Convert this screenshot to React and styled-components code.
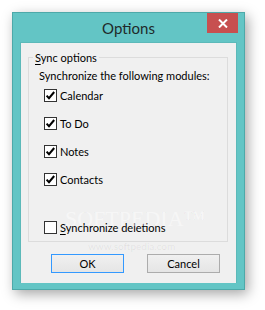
import React from "react";
import styled, { createGlobalStyle } from "styled-components";

const Global = createGlobalStyle`
  html, body { margin: 0; padding: 0; background: #ffffff; overflow: hidden; }
  body { font-family: Lato, "Noto Sans", sans-serif; }
`;

const Stage = styled.div`
  width: 265px;
  height: 310px;
  padding: 12px 0 0 12px;
  box-sizing: border-box;
`;

const Window = styled.div`
  position: relative;
  width: 233px;
  height: 278px;
  box-sizing: border-box;
  border: 1px solid #4da9a9;
  background: #63c5c5;
  box-shadow: 3px 4px 12px rgba(0, 0, 0, 0.35);
  display: flex;
  flex-direction: column;
  overflow: hidden;
`;

const TitleBar = styled.div`
  height: 29px;
  display: grid;
  grid-template-columns: 1fr auto 1fr;
  align-items: start;
`;

const Title = styled.div`
  grid-column: 2;
  font-size: 15px;
  line-height: 29px;
  color: #1f2a2a;
  padding-top: 1px;
`;

const CloseButton = styled.div`
  grid-column: 3;
  justify-self: end;
  margin-right: 6px;
  width: 31px;
  height: 20px;
  background: #c75050;
  display: flex;
  align-items: center;
  justify-content: center;
`;

const Client = styled.div`
  flex: 1;
  margin: 0 7px 6px 7px;
  background: #f0f0f0;
  border: 1px solid #5cb9b9;
  border-bottom: none;
  display: flex;
  flex-direction: column;
  padding: 7px 8px 0 7px;
  font-size: 11px;
  color: #000;
  white-space: nowrap;
`;

const GroupBox = styled.fieldset`
  margin: 0;
  border: 1px solid #dcdcdc;
  padding: 3px 8px 0 10px;
  height: 192px;
  box-sizing: border-box;
  display: flex;
  flex-direction: column;
`;

const Legend = styled.legend`
  padding: 0 2px;
  margin-left: -6px;
  line-height: 15px;
  font-size: 11px;
`;

const Caption = styled.div`
  line-height: 15px;
  height: 15px;
  margin-bottom: 6px;
`;

const CheckList = styled.div`
  display: flex;
  flex-direction: column;
  gap: 15px;
  padding-left: 5px;
`;

const CheckRow = styled.label`
  display: flex;
  align-items: center;
  gap: 3px;
  height: 13px;
  line-height: 15px;
  margin-top: ${(p) => (p.$gap ? p.$gap : 0)}px;
`;

const Box = styled.span`
  width: 13px;
  height: 13px;
  box-sizing: border-box;
  border: 1px solid #333333;
  background: #ffffff;
  display: flex;
  flex: none;
`;

const U = styled.span`
  text-decoration: underline;
  text-underline-offset: 2px;
`;

const ButtonRow = styled.div`
  display: flex;
  gap: 23px;
  padding-left: 23px;
  margin-top: 12px;
`;

const Button = styled.div`
  width: 73px;
  height: 19px;
  box-sizing: border-box;
  border: 1px solid ${(p) => (p.$default ? "#3399ff" : "#acacac")};
  background: linear-gradient(#f0f0f0, #e5e5e5);
  display: flex;
  align-items: center;
  justify-content: center;
  font-size: 11px;
  line-height: 15px;
`;

const Watermark = styled.div`
  position: absolute;
  left: 52px;
  top: 193px;
  font-family: "Liberation Serif", serif;
  font-size: 22px;
  color: rgba(255, 255, 255, 0.45);
  -webkit-text-stroke: 0.5px rgba(0, 0, 0, 0.045);
  pointer-events: none;
  white-space: nowrap;
`;

const WatermarkUrl = styled.div`
  position: absolute;
  left: 75px;
  top: 227px;
  font-size: 10px;
  color: rgba(0, 0, 0, 0.07);
  pointer-events: none;
`;

const Check = ({ checked }) => (
  <Box>
    {checked && (
      <svg width="11" height="11" viewBox="0 0 11 11">
        <path d="M1.6 5.6 L4 8.2 L9.2 2" fill="none" stroke="#000" strokeWidth="2" />
      </svg>
    )}
  </Box>
);

export default function App() {
  const modules = ["Calendar", "To Do", "Notes", "Contacts"];
  return (
    <>
      <Global />
      <Stage>
        <Window>
          <TitleBar>
            <Title>Options</Title>
            <CloseButton>
              <svg width="10" height="9" viewBox="0 0 10 9">
                <path d="M1 0.5 L9 8.5 M9 0.5 L1 8.5" stroke="#fff" strokeWidth="2" />
              </svg>
            </CloseButton>
          </TitleBar>
          <Client>
            <GroupBox>
              <Legend>
                <U>S</U>ync options
              </Legend>
              <Caption>Synchronize the following modules:</Caption>
              <CheckList>
                {modules.map((m) => (
                  <CheckRow key={m}>
                    <Check checked />
                    {m}
                  </CheckRow>
                ))}
                <CheckRow $gap={20}>
                  <Check />
                  <span>
                    <U>S</U>ynchronize deletions
                  </span>
                </CheckRow>
              </CheckList>
            </GroupBox>
            <ButtonRow>
              <Button $default>OK</Button>
              <Button>Cancel</Button>
            </ButtonRow>
          </Client>
          <Watermark>SOFTPEDIA™</Watermark>
          <WatermarkUrl>www.softpedia.com</WatermarkUrl>
        </Window>
      </Stage>
    </>
  );
}
